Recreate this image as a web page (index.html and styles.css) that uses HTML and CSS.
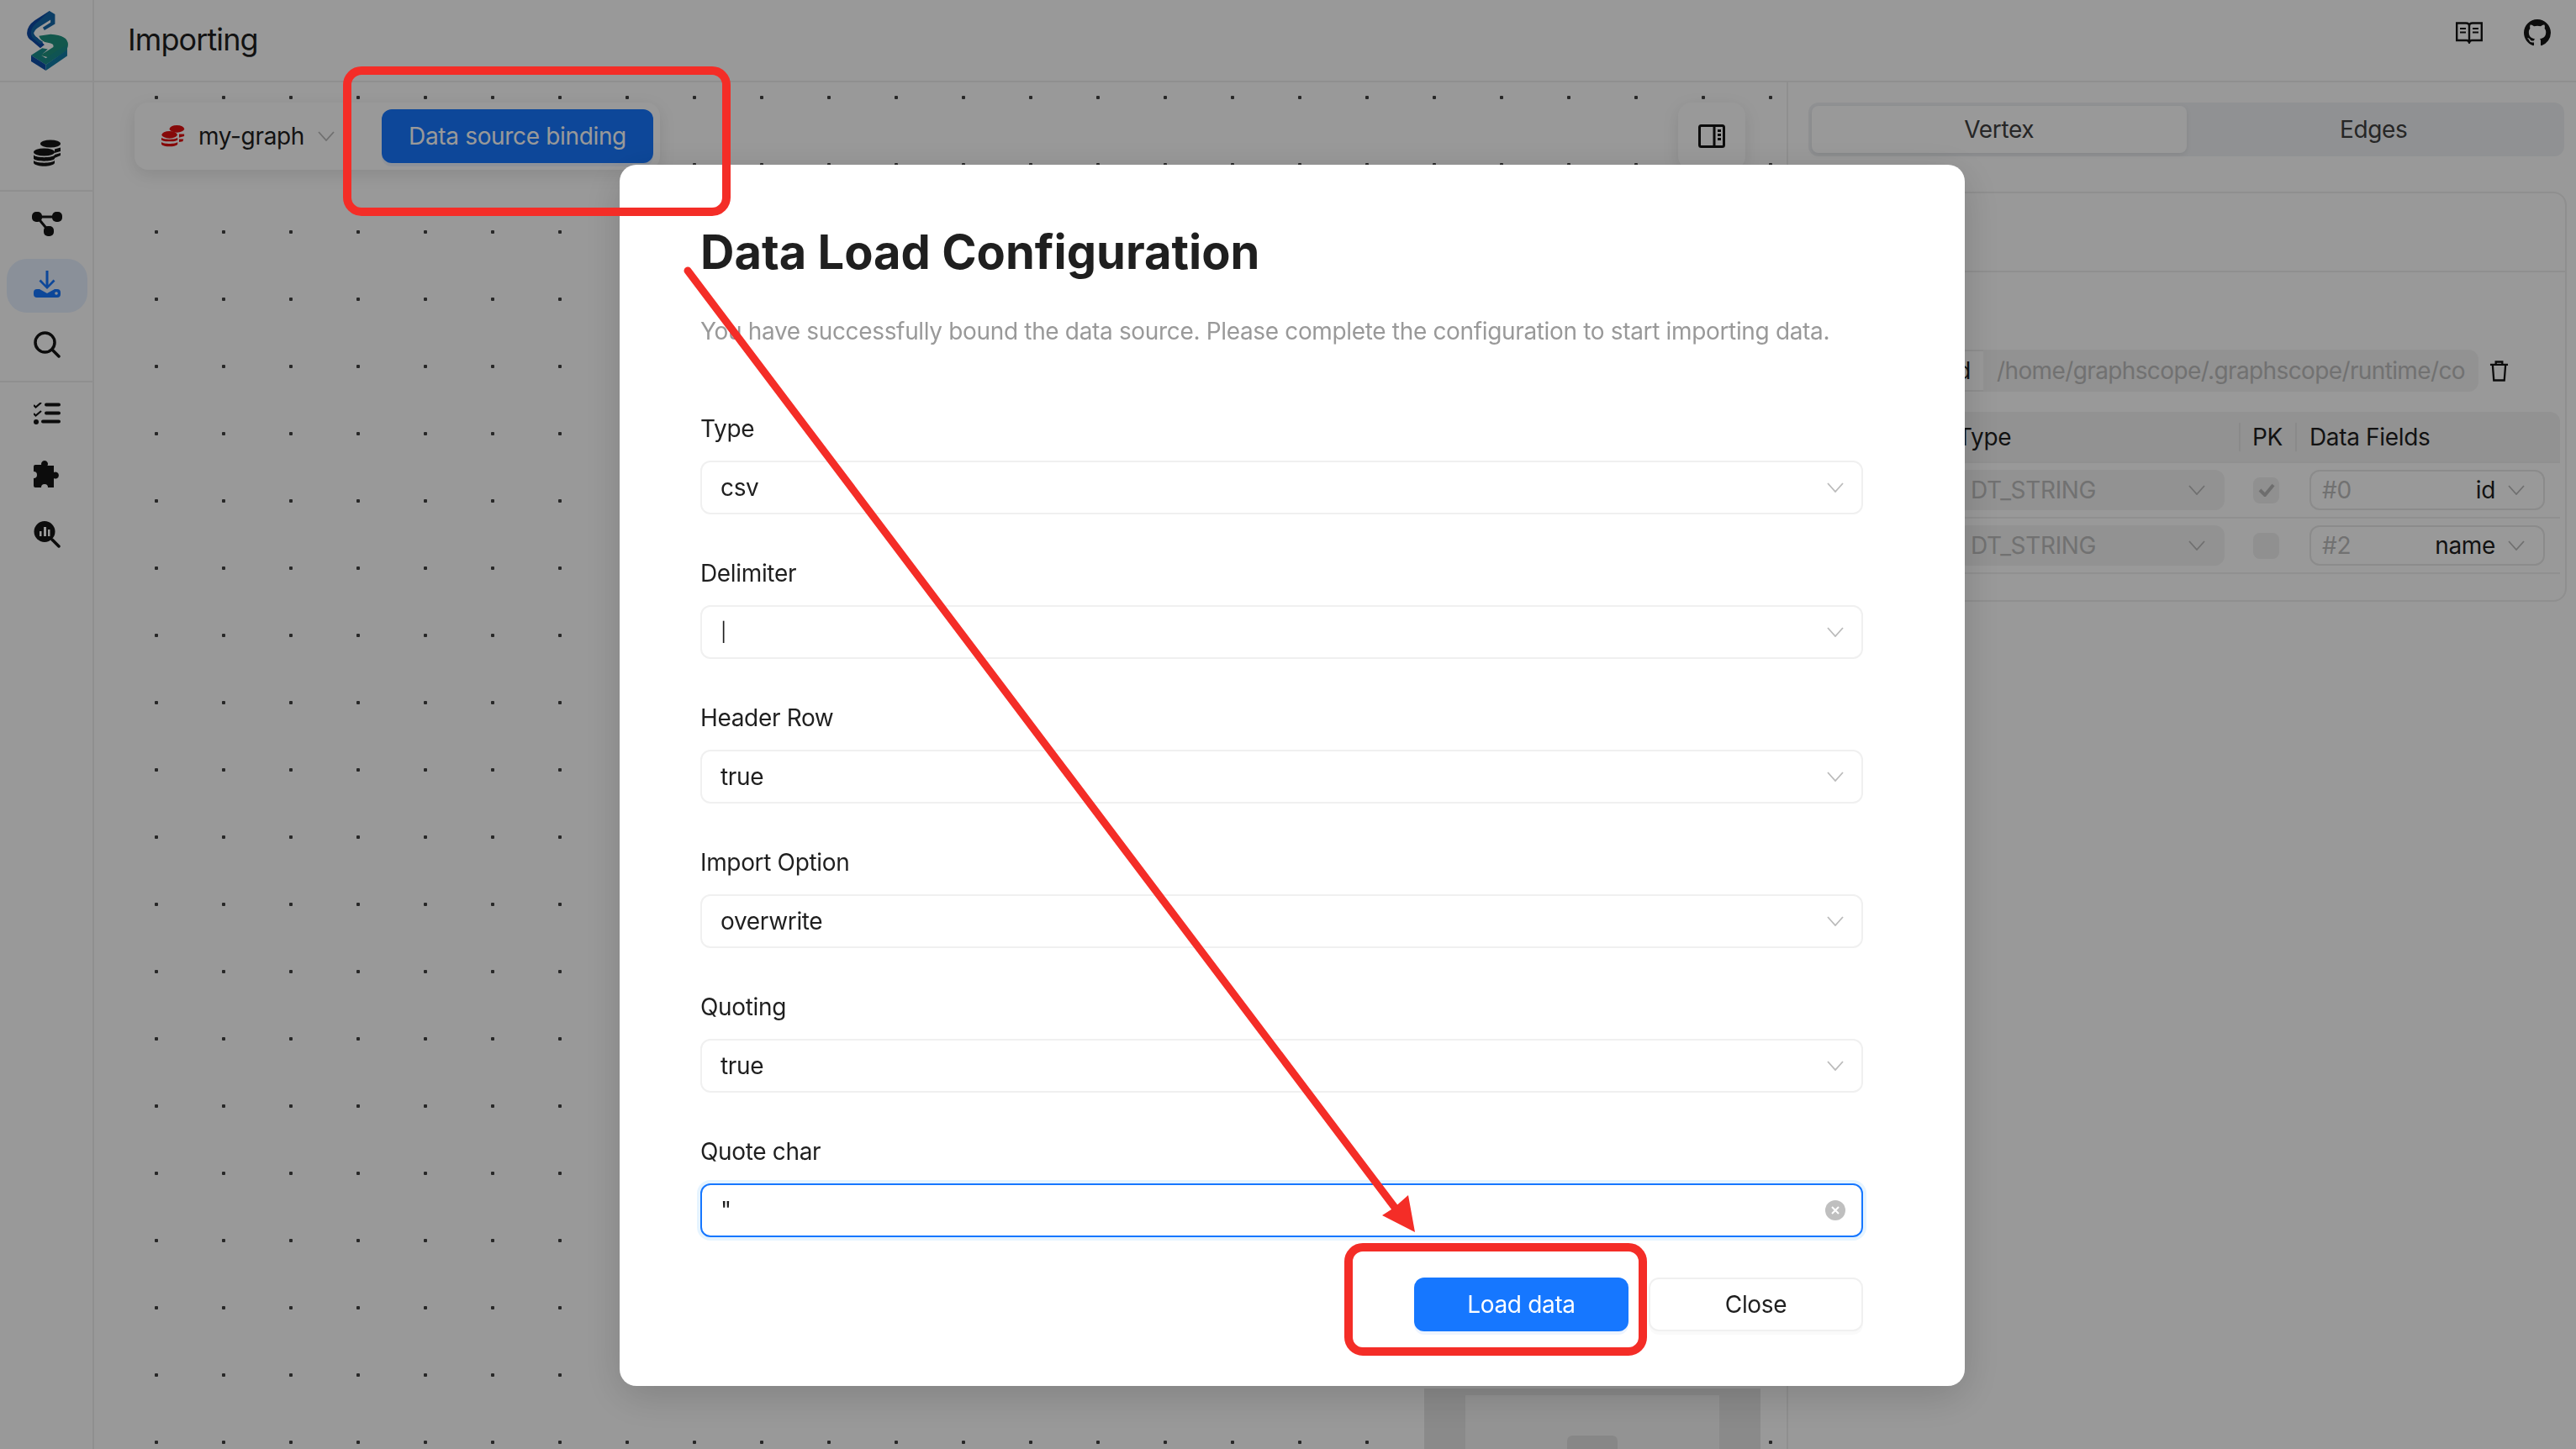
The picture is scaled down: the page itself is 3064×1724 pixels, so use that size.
FILE: index.html
```html
<!DOCTYPE html>
<html lang="en">
<head>
  <meta charset="UTF-8" />
  <title>Importing</title>
  <link rel="stylesheet" href="styles.css">
</head>
<body>

  <div class="app">
    <aside class="sidebar">
      <div class="logo-box">
        <svg class="logo" viewBox="37 38 151 215" width="50" height="71">
          <path d="M118 38L65 72Q37 92 37 118Q37 135 55 146L85 172L100 160L75 135Q60 125 60 112Q62 95 80 85L118 60Z" fill="#0e49a3"/>
          <path d="M118 38L138 50V85L100 108L94 98L122 80V70L80 96Q60 108 62 122Q64 130 80 140L95 150L85 158L60 138Q50 128 52 112Q54 92 80 74Z" fill="#1468a8"/>
          <path d="M80 128L122 122Q185 125 185 160Q185 175 170 185L125 208L85 198L132 168Q136 155 112 152Q88 150 80 128Z" fill="#1f917f"/>
          <path d="M52 198L92 172L112 176L88 198L105 208L150 178L182 160V180L105 232Z" fill="#1a8c8a"/>
          <path d="M52 198L105 232V253L52 220Z" fill="#0e4ea6"/>
          <path d="M105 232L182 178V200L105 253Z" fill="#127aa3"/>
        </svg>
      </div>
      <nav class="nav-group nav-first">
        <a class="nav-item"><svg viewBox="0 0 32 32" class="icon"><ellipse cx="20" cy="5" rx="12" ry="4.500"/><path d="M25 11.500l7-2V14l-7 2zM25 18l7-2v3l-7 3z"/><ellipse cx="12.500" cy="15" rx="12.500" ry="4.500"/><path d="M0 18.500c3 3.500 22 3.500 25 0V23c-3 3.500-22 3.500-25 0zM0 25c3 3.500 22 3.500 25 0v3c-3 5-22 5-25 0z"/></svg></a>
      </nav>
      <nav class="nav-group nav-second">
        <a class="nav-item"><svg viewBox="0 0 36 29" class="icon-graph"><rect x="0" y="0" width="12" height="12" rx="5"/><rect x="24" y="0" width="12" height="12" rx="5"/><rect x="14" y="17" width="12" height="12" rx="5"/><path d="M6 6H30M6 6L20 23" fill="none" stroke="#141414" stroke-width="3"/></svg></a>
        <a class="nav-item active"><svg viewBox="0 0 32 32" class="icon"><path d="M14.500 0h3v17l6-6.500 2 2-9.500 9.500-9.500-9.500 2-2 6 6.500z"/><path d="M4 22h3l9 5 9-5h3q4 0 4 4v2q0 4-4 4H4q-4 0-4-4v-2q0-4 4-4z"/><circle cx="27" cy="27" r="1.800" fill="#e8f1ff"/></svg></a>
        <a class="nav-item"><svg viewBox="0 0 32 32" class="icon"><circle cx="13.500" cy="13.500" r="11.500" fill="none" stroke="#141414" stroke-width="3.500"/><path d="M22 22l8 8" fill="none" stroke="#141414" stroke-width="3.500" stroke-linecap="round"/></svg></a>
      </nav>
      <nav class="nav-group nav-third">
        <a class="nav-item"><svg viewBox="0 0 32 26" class="icon-list"><path d="M15 2.500h15M15 12.500h15M11 22.500h19" fill="none" stroke="#141414" stroke-width="4" stroke-linecap="round"/><circle cx="3" cy="23" r="3"/><path d="M0 3l2.500 2.500L9 0M0 13l2.500 2.500L9 10" fill="none" stroke="#141414" stroke-width="2.200"/></svg></a>
        <a class="nav-item"><svg viewBox="0 0 32 32" class="icon"><path d="M9.500 6A4 4 0 1 1 16.500 6H24V14A4 4 0 1 1 24 21V32H17a4 4 0 0 0-8 0H2q-2 0-2-2V21a4 4 0 0 0 0-8V7q0-2 2-2H9.500z"/></svg></a>
        <a class="nav-item"><svg viewBox="0 0 32 32" class="icon"><circle cx="13" cy="12.500" r="12.500"/><path d="M22 22l8 8" fill="none" stroke="#141414" stroke-width="3.500" stroke-linecap="round"/><path d="M7 12h2.500v6H7zM12 7h3v11h-3zM17 10h2.500v8H17z" fill="#fff"/></svg></a>
      </nav>
    </aside>

    <div class="main">
      <header class="topbar">
        <span class="page-title">Importing</span>
        <div class="topbar-icons">
          <svg viewBox="0 0 32 26" class="icon-book"><path d="M1.200 1.500h11Q16 1.500 16 5q0-3.500 3.800-3.500h11V22H19q-2 0-3 2.500-1-2.500-3-2.500H1.200zM16 5v19" fill="none" stroke="#141414" stroke-width="2.400"/><path d="M5 8h7M5 12.500h7M20 8h7M20 12.500h7" stroke="#141414" stroke-width="2.200"/></svg>
          <svg viewBox="0 0 16 16" class="icon-github"><path d="M8 0C3.580 0 0 3.580 0 8c0 3.540 2.290 6.530 5.470 7.590.4.070.55-.17.55-.38 0-.19-.01-.82-.01-1.490-2.010.37-2.530-.49-2.690-.94-.09-.23-.48-.94-.82-1.130-.28-.15-.68-.52-.01-.53.63-.01 1.080.58 1.230.82.720 1.210 1.870.87 2.330.66.070-.52.280-.87.510-1.070-1.780-.2-3.640-.89-3.640-3.950 0-.87.310-1.590.820-2.150-.08-.2-.36-1.020.08-2.120 0 0 .67-.21 2.200.82.640-.18 1.320-.27 2-.27.680 0 1.360.09 2 .27 1.530-1.040 2.200-.82 2.200-.82.440 1.100.16 1.920.08 2.120.51.560.82 1.270.82 2.150 0 3.070-1.870 3.750-3.650 3.950.29.250.54.730.54 1.480 0 1.070-.01 1.930-.01 2.200 0 .21.150.46.550.38A8.013 8.013 0 0 0 16 8c0-4.420-3.580-8-8-8z" fill="#141414"/></svg>
        </div>
      </header>

      <div class="content">
        <section class="canvas">
          <div class="canvas-bar">
            <div class="toolbar">
              <svg viewBox="0 0 32 32" class="graph-icon"><ellipse cx="21" cy="6" rx="10" ry="5"/><path d="M24 13h7v3l-7 2zM24 20h6l-1 3-5 1z"/><ellipse cx="11" cy="14" rx="10.500" ry="5"/><path d="M0 18c3 3 19 3 22 0v3c-3 3-19 3-22 0zM0 24c3 3 19 3 22 0v3c-3 4-19 4-22 0z"/></svg>
              <span class="graph-name">my-graph</span>
              <svg viewBox="0 0 20 12" class="chev chev-name"><path d="M1 1l9 10 9-10"/></svg>
              <button class="btn-primary btn-bind">Data source binding</button>
            </div>
            <div class="toggle-panel">
              <svg viewBox="0 0 32 28" class="toggle-icon"><rect x="1.500" y="1.500" width="29" height="25" rx="2" fill="none" stroke="#141414" stroke-width="3"/><path d="M19 2v24" stroke="#141414" stroke-width="3"/><path d="M23 6h4v3h-4zM23 11h4v3h-4zM23 16h4v3h-4z" fill="#141414"/></svg>
            </div>
          </div>
          <div class="node"><div class="node-inner"><div class="node-handle"></div></div></div>
        </section>

        <aside class="panel">
          <div class="segmented">
            <div class="seg-item seg-active">Vertex</div>
            <div class="seg-item">Edges</div>
          </div>
          <div class="card">
            <div class="card-head"></div>
            <div class="card-body">
              <div class="path-row">
                <span class="addon">Located</span>
                <span class="path-input">/home/graphscope/.graphscope/runtime/co</span>
                <svg viewBox="0 0 24 26" class="trash"><path d="M1 5h22M8 5V1.500h8V5M4 5l1.500 19.500h13L20 5" fill="none" stroke="#141414" stroke-width="2.400"/></svg>
              </div>
              <div class="table">
                <div class="tr th">
                  <div class="col-name"></div>
                  <div class="col-type">Type</div>
                  <div class="col-pk">PK</div>
                  <div class="col-data">Data Fields</div>
                </div>
                <div class="tr">
                  <div class="col-name"></div>
                  <div class="col-type"><div class="dt-select">DT_STRING<svg viewBox="0 0 20 12" class="chev"><path d="M1 1l9 10 9-10"/></svg></div></div>
                  <div class="col-pk"><span class="check"><svg viewBox="0 0 20 16"><path d="M2 8l6 6L18 2" fill="none" stroke="#b8b8b8" stroke-width="4"/></svg></span></div>
                  <div class="col-data"><div class="field-select"><span class="hash">#0</span><span class="field-name">id</span><svg viewBox="0 0 20 12" class="chev"><path d="M1 1l9 10 9-10"/></svg></div></div>
                </div>
                <div class="tr">
                  <div class="col-name"></div>
                  <div class="col-type"><div class="dt-select">DT_STRING<svg viewBox="0 0 20 12" class="chev"><path d="M1 1l9 10 9-10"/></svg></div></div>
                  <div class="col-pk"><span class="check"></span></div>
                  <div class="col-data"><div class="field-select"><span class="hash">#2</span><span class="field-name">name</span><svg viewBox="0 0 20 12" class="chev"><path d="M1 1l9 10 9-10"/></svg></div></div>
                </div>
              </div>
            </div>
          </div>
        </aside>
      </div>
    </div>
  </div>

  <div class="mask"></div>

  <div class="modal-wrap">
    <div class="modal">
      <h1 class="modal-title">Data Load Configuration</h1>
      <p class="modal-desc">You have successfully bound the data source. Please complete the configuration to start importing data.</p>

      <div class="field">
        <label>Type</label>
        <div class="select">csv<svg viewBox="0 0 20 12" class="chev"><path d="M1 1l9 10 9-10"/></svg></div>
      </div>
      <div class="field">
        <label>Delimiter</label>
        <div class="select"><span class="pipe">|</span><svg viewBox="0 0 20 12" class="chev"><path d="M1 1l9 10 9-10"/></svg></div>
      </div>
      <div class="field">
        <label>Header Row</label>
        <div class="select">true<svg viewBox="0 0 20 12" class="chev"><path d="M1 1l9 10 9-10"/></svg></div>
      </div>
      <div class="field">
        <label>Import Option</label>
        <div class="select">overwrite<svg viewBox="0 0 20 12" class="chev"><path d="M1 1l9 10 9-10"/></svg></div>
      </div>
      <div class="field">
        <label>Quoting</label>
        <div class="select">true<svg viewBox="0 0 20 12" class="chev"><path d="M1 1l9 10 9-10"/></svg></div>
      </div>
      <div class="field">
        <label>Quote char</label>
        <div class="select select-focus">"<svg viewBox="0 0 24 24" class="clear"><circle cx="12" cy="12" r="12" fill="#bfbfbf"/><path d="M8 8l8 8M16 8l-8 8" stroke="#fff" stroke-width="2"/></svg></div>
      </div>

      <div class="modal-actions">
        <button class="btn-primary btn-load">Load data</button>
        <button class="btn-default">Close</button>
      </div>
    </div>
  </div>

  <!-- red annotations drawn on the screenshot -->
  <div class="mark mark-bind"></div>
  <div class="mark mark-load"></div>
  <svg class="arrow" viewBox="0 0 3064 1724" width="3064" height="1724">
    <path d="M818 322L1660 1438" fill="none" stroke="#f42d27" stroke-width="9" stroke-linecap="round"/>
    <path d="M1683 1466L1675 1422L1658 1437L1644 1446Z" fill="#f42d27"/>
  </svg>

</body>
</html>
```

FILE: styles.css
```css
* {
  box-sizing: border-box;
}

html, body {
  margin: 0;
  height: 100%;
  overflow: hidden;
}

body {
  background-color: #fff;
  color: #1f1f1f;
  font-family: Inter, "Noto Sans", sans-serif;
  font-size: 28px;
  letter-spacing: -.34px;
}

.app {
  display: flex;
  height: 1724px;
}

/* left nav */
.sidebar {
  width: 112px;
  flex: none;
  border-right: 2px solid #eee;
}

.logo-box {
  height: 98px;
  display: flex;
  align-items: center;
  justify-content: center;
  border-bottom: 2px solid #eee;
}

.logo {
  display: block;
  margin-left: 4px;
}

.nav-group {
  display: flex;
  flex-direction: column;
  padding: 0 6px 0 8px;
  border-bottom: 2px solid #eee;
}

.nav-first {
  height: 130px;
  padding-top: 52px;
}

.nav-second {
  height: 227px;
  padding-top: 6px;
}

.nav-second .active {
  margin: 10px 0 6px;
}

.nav-third {
  padding-top: 5px;
  gap: 8px;
  border-bottom: none;
}

.nav-item {
  height: 64px;
  flex: none;
  display: flex;
  align-items: center;
  justify-content: center;
  border-radius: 24px;
}

.nav-item svg {
  fill: #141414;
}

.icon {
  width: 32px;
  height: 32px;
}

.icon-graph {
  width: 36px;
  height: 29px;
}

.icon-list {
  width: 32px;
  height: 26px;
}

.active {
  background-color: #e6f0ff;
}

.nav-item.active svg {
  fill: #1677ff;
  margin-top: -4px;
}

/* top bar */
.main {
  flex: 1;
  display: flex;
  flex-direction: column;
  min-width: 0;
}

.topbar {
  height: 98px;
  flex: none;
  display: flex;
  align-items: center;
  justify-content: space-between;
  padding: 0 30px 0 40px;
  border-bottom: 2px solid #eee;
}

.page-title {
  font-size: 36px;
  letter-spacing: -.9px;
  margin-top: -2px;
}

.topbar-icons {
  display: flex;
  align-items: center;
  gap: 49px;
  margin-top: -18px;
}

.icon-book {
  width: 32px;
  height: 26px;
  display: block;
}

.icon-github {
  width: 32px;
  height: 32px;
  display: block;
}

.content {
  flex: 1;
  display: flex;
  min-height: 0;
}

/* canvas with dots */
.canvas {
  flex: 1;
  position: relative;
  padding: 24px 48px 0;
  background-image: radial-gradient(circle, #444 0, #444 2px, transparent 2.500px);
  background-size: 80px 80px;
  background-position: 34px -22px;
}

.canvas-bar {
  display: flex;
  justify-content: space-between;
}

.toolbar {
  width: 625px;
  height: 80px;
  display: flex;
  align-items: center;
  padding: 0 8px 0 32px;
  background-color: #fff;
  border-radius: 16px;
  box-shadow: 0 6px 20px rgba(0, 0, 0, .1);
}

.graph-icon {
  width: 28px;
  height: 28px;
  fill: #e01010;
}

.graph-name {
  margin-left: 16px;
}

.chev {
  width: 20px;
  height: 12px;
  flex: none;
  fill: none;
  stroke: #bbb;
  stroke-width: 1.800;
}

.chev-name {
  margin-left: 16px;
}

.btn-primary {
  border: none;
  border-radius: 12px;
  background-color: #1677ff;
  color: #fff;
  font-family: inherit;
  font-size: 28px;
  letter-spacing: inherit;
  height: 64px;
  box-shadow: 0 4px 0 rgba(22, 119, 255, .08);
}

.btn-bind {
  width: 323px;
  margin-left: auto;
}

.toggle-panel {
  width: 80px;
  height: 80px;
  margin-right: 1px;
  display: flex;
  align-items: center;
  justify-content: center;
  background-color: #fff;
  border-radius: 16px;
  box-shadow: 0 6px 20px rgba(0, 0, 0, .1);
}

.toggle-icon {
  width: 32px;
  height: 28px;
}

/* node peeking out under the dialog */
.node {
  position: absolute;
  left: 1582px;
  top: 1554px;
  width: 400px;
  height: 80px;
  padding: 8px 49px 0;
  background-color: #e6e6e6;
}

.node-inner {
  height: 72px;
  background-color: #f6f6f6;
  display: flex;
  justify-content: center;
}

.node-handle {
  width: 60px;
  height: 30px;
  margin-top: 48px;
  border-radius: 6px 6px 0 0;
  background-color: #e2e2e2;
}

/* right panel */
.panel {
  width: 939px;
  flex: none;
  padding: 24px 11px 0 24px;
  border-left: 2px solid #eee;
}

.segmented {
  display: flex;
  height: 64px;
  margin-right: 3px;
  padding: 4px;
  border-radius: 12px;
  background-color: #f0f2f5;
}

.seg-item {
  flex: 1;
  display: flex;
  align-items: center;
  justify-content: center;
  color: #404040;
  border-radius: 8px;
}

.seg-active {
  background-color: #fff;
  box-shadow: 0 2px 6px rgba(0, 0, 0, .08);
}

.card {
  height: 488px;
  margin-top: 42px;
  border: 2px solid #eee;
  border-radius: 16px;
}

.card-head {
  height: 94px;
  border-bottom: 2px solid #eee;
}

.card-body {
  padding: 92px 8px 0;
}

.path-row {
  display: flex;
  align-items: center;
  justify-content: flex-end;
  height: 50px;
  padding-right: 59px;
}

.addon {
  height: 50px;
  line-height: 46px;
  padding: 0 15px 0 16px;
  border: 2px solid #eee;
  border-right: none;
  border-radius: 12px 0 0 12px;
}

.path-input {
  width: 589px;
  height: 50px;
  line-height: 50px;
  padding-left: 16px;
  color: #bdbdbd;
  background-color: #f3f3f3;
  border-radius: 0 12px 12px 0;
  letter-spacing: -.62px;
  white-space: nowrap;
  overflow: hidden;
}

.trash {
  width: 23px;
  height: 25px;
  flex: none;
  margin-left: 13px;
}

.table {
  margin-top: 24px;
  width: 884px;
}

.tr {
  display: flex;
  height: 66px;
  align-items: center;
  border-bottom: 2px solid #f0f0f0;
}

.th {
  height: 61px;
  background-color: #f3f3f3;
  border-radius: 12px 12px 0 0;
}

.col-name {
  width: 167px;
  flex: none;
}

.col-type {
  width: 335px;
  flex: none;
}

.col-pk {
  width: 67px;
  flex: none;
  padding-left: 17px;
}

.th .col-pk, .th .col-data {
  height: 34px;
  line-height: 34px;
  border-left: 2px solid #e6e6e6;
}

.th .col-pk {
  padding-left: 14px;
}

.th .col-data {
  padding-left: 15px;
}

.col-data {
  flex: 1;
  padding-left: 17px;
}

.dt-select {
  width: 318px;
  height: 48px;
  display: flex;
  align-items: center;
  justify-content: space-between;
  padding: 0 23px 0 16px;
  color: #bdbdbd;
  background-color: #f3f3f3;
  border-radius: 12px;
}

.check {
  width: 31px;
  height: 31px;
  display: flex;
  align-items: center;
  justify-content: center;
  background-color: #f0f0f0;
  border-radius: 8px;
}

.check svg {
  width: 20px;
  height: 16px;
}

.field-select {
  width: 280px;
  height: 48px;
  display: flex;
  align-items: center;
  padding: 0 22px 0 13px;
  border: 2px solid #e8e8e8;
  border-radius: 12px;
}

.hash {
  color: #bdbdbd;
}

.field-name {
  margin-left: auto;
  margin-right: 15px;
}

/* dialog */
.mask {
  position: fixed;
  inset: 0;
  background-color: rgba(0, 0, 0, .4);
}

.modal-wrap {
  position: fixed;
  inset: 0;
  padding: 196px 0 0 737px;
}

.modal {
  width: 1600px;
  height: 1453px;
  padding: 70px 121px 0 96px;
  background-color: #fff;
  border-radius: 20px;
  box-shadow: 0 12px 48px rgba(0, 0, 0, .16);
}

.modal-title {
  margin: 0;
  font-size: 56px;
  line-height: 68px;
  font-weight: 700;
  letter-spacing: 0;
  color: #1f1f1f;
}

.modal-desc {
  margin: 40px 0 0;
  line-height: 40px;
  color: #999;
  white-space: nowrap;
}

.field {
  height: 172px;
}

.modal-desc + .field {
  margin-top: 78px;
}

.field label {
  display: block;
  height: 36px;
  line-height: 36px;
  margin-bottom: 20px;
}

.select {
  height: 64px;
  display: flex;
  align-items: center;
  justify-content: space-between;
  padding: 0 21px 0 22px;
  border: 2px solid #f0f0f0;
  border-radius: 12px;
}

.pipe {
  font-size: 22px;
}

.select-focus {
  border-color: #1677ff;
  box-shadow: 0 0 0 4px rgba(5, 145, 255, .1);
}

.clear {
  width: 24px;
  height: 24px;
  margin-right: -2px;
}

.modal-actions {
  display: flex;
  justify-content: flex-end;
  gap: 26px;
  margin-top: -4px;
}

.btn-load, .btn-default {
  width: 255px;
  height: 64px;
}

.btn-load {
  margin-right: -1px;
  transform: translateX(1px);
}

.btn-default {
  border: 2px solid #f0f0f0;
  border-radius: 12px;
  background-color: #fff;
  color: #1f1f1f;
  font-family: inherit;
  font-size: 28px;
  letter-spacing: inherit;
  box-shadow: 0 4px 0 rgba(0, 0, 0, .02);
}

/* red annotations */
.mark {
  position: fixed;
  border: 10px solid #f42d27;
  border-radius: 22px;
}

.mark-bind {
  left: 408px;
  top: 79px;
  width: 461px;
  height: 178px;
}

.mark-load {
  left: 1599px;
  top: 1479px;
  width: 360px;
  height: 134px;
}

.arrow {
  position: fixed;
  left: 0;
  top: 0;
}
```
